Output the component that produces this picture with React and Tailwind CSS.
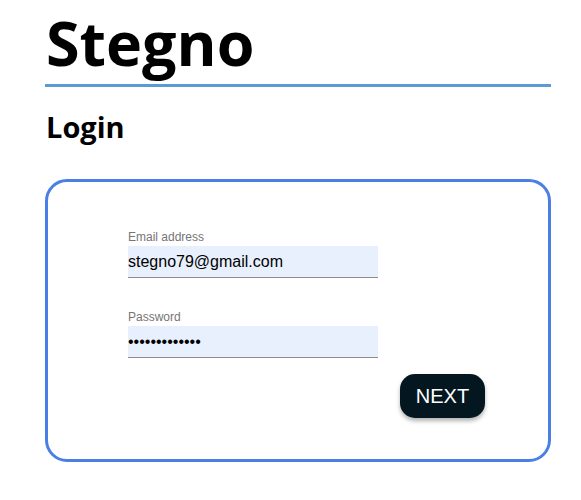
import React from "react";

export default function App() {
  return (
    <div className="w-[581px] h-[500px] bg-white pl-[45px] pr-[30px]" style={{ fontFamily: '"Open Sans", sans-serif' }}>
      <h1 className="pt-[1px] text-[61px] leading-[83px] font-bold text-black border-b-[3px] border-[#5b9bd5] pl-px">
        Stegno
      </h1>
      <h2 className="mt-[25px] text-[29px] leading-[29px] font-bold text-black pl-px">Login</h2>
      <div className="mt-[38px] h-[283px] border-[3px] border-[#4a7fe6] rounded-[22px] pl-[80px] pt-[48px]">
        <div className="w-[357px] flex flex-col" style={{ fontFamily: '"Liberation Sans", Arial, sans-serif' }}>
          <label className="text-[12px] leading-[14px] text-[#757575]">Email address</label>
          <input
            readOnly
            defaultValue="stegno79@gmail.com"
            className="mt-[2px] w-[250px] h-[32px] bg-[#e8f0fe] border-b border-[#8c8c8c] text-[16px] text-black outline-none p-0"
          />
          <label className="mt-[32px] text-[12px] leading-[14px] text-[#757575]">Password</label>
          <input
            readOnly
            type="password"
            defaultValue="stegnopass123"
            className="mt-[2px] w-[250px] h-[32px] bg-[#e8f0fe] border-b border-[#8c8c8c] text-[16px] text-black outline-none p-0"
          />
          <button className="self-end mt-[16px] w-[85px] h-[44px] rounded-[15px] bg-[#04161f] text-white text-[20px] shadow-[0_3px_4px_rgba(0,0,0,0.3)]">
            NEXT
          </button>
        </div>
      </div>
    </div>
  );
}
